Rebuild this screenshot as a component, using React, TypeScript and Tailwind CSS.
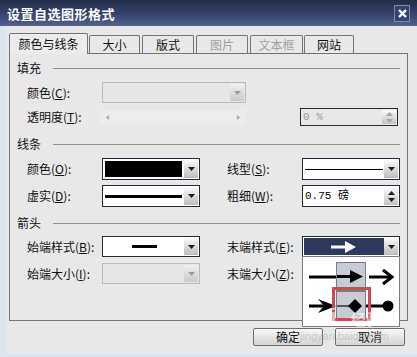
import React from "react";

const Down = ({ dim }: { dim?: boolean }) => (
  <svg width="7" height="4" viewBox="0 0 7 4">
    <path d="M0 0H7L3.5 4Z" fill={dim ? "#9c9c9c" : "#1e1e1e"} />
  </svg>
);

function ArrowBtn({ dim }: { dim?: boolean }) {
  return (
    <div
      className={
        dim
          ? "w-[14px] h-full flex items-center justify-center bg-linear-to-b from-[#f0f0f0] to-[#cacaca]"
          : "w-[14px] h-full flex items-center justify-center bg-linear-to-b from-[#fbfbfb] to-[#bcbcbc]"
      }
    >
      <Down dim={dim} />
    </div>
  );
}

function Combo({
  className,
  dim,
  children,
  innerClass,
}: {
  className: string;
  dim?: boolean;
  children?: React.ReactNode;
  innerClass?: string;
}) {
  return (
    <div
      className={`flex p-px border ${
        dim ? "border-[#b7bbbf] bg-[#e6e6e6]" : "border-[#222c38] bg-white"
      } ${className}`}
    >
      <div className={`flex-1 flex items-center ${innerClass ?? "p-px"}`}>{children}</div>
      <ArrowBtn dim={dim} />
    </div>
  );
}

function Spin({ className, text, dim }: { className: string; text: string; dim?: boolean }) {
  return (
    <div
      className={`flex p-px border border-[#222c38] ${dim ? "bg-[#e8e8e8]" : "bg-white"} ${className}`}
    >
      <div
        className={`flex-1 flex items-center pl-[1px] font-['Liberation_Mono','Noto_Sans_CJK_SC',monospace] text-[11px] leading-none ${
          dim ? "text-[#9a9a9a]" : "text-black"
        }`}
      >
        {text}
      </div>
      <div className="w-[14px] h-full flex flex-col items-center justify-center gap-[3px] bg-linear-to-b from-[#fbfbfb] to-[#c4c4c4]">
        <svg width="7" height="4" viewBox="0 0 7 4">
          <path d="M0 4H7L3.5 0Z" fill={dim ? "#a8a8a8" : "#1e1e1e"} />
        </svg>
        <svg width="7" height="4" viewBox="0 0 7 4">
          <path d="M0 0H7L3.5 4Z" fill={dim ? "#a8a8a8" : "#1e1e1e"} />
        </svg>
      </div>
    </div>
  );
}

function Label({ text, k, w }: { text: string; k: string; w: string }) {
  return (
    <div className={`${w} text-[12px] leading-none text-[#111]`}>
      {text}(<span className="underline underline-offset-1">{k}</span>):
    </div>
  );
}

function Section({ label }: { label: string }) {
  return (
    <div className="flex items-center h-[14px] pl-[7px] pr-[7px]">
      <span className="text-[12px] leading-none text-[#111]">{label}</span>
      <div className="ml-[12px] flex-1 h-px bg-[#8e8e8e]" />
    </div>
  );
}

function Tab({
  label,
  className,
  active,
  dim,
}: {
  label: string;
  className: string;
  active?: boolean;
  dim?: boolean;
}) {
  return (
    <div
      className={`flex items-center justify-center border border-b-0 border-[#6f777c] rounded-t-[2px] text-[12px] leading-none ${
        active ? "h-[21px] -mb-px relative z-10 bg-[#ececec]" : "h-[18px] bg-[#e8e8e8]"
      } ${dim ? "text-[#a3a3a3]" : "text-[#111]"} ${className}`}
    >
      {label}
    </div>
  );
}

function PopCell({ children, hl }: { children: React.ReactNode; hl?: boolean }) {
  return (
    <div
      className={`w-[30px] h-[29px] flex items-center ${
        hl ? "bg-[#c7cbd5] border border-[#757c8c]" : ""
      }`}
    >
      {children}
    </div>
  );
}

export default function App() {
  return (
    <div className="w-[417px] h-[357px] flex flex-col overflow-hidden bg-[#dce5ee] font-['Noto_Sans_CJK_SC','Noto_Sans',sans-serif] relative">
      {/* Title bar */}
      <div className="h-[26px] flex items-center justify-between pl-[7px] pr-[7px] bg-linear-to-b from-[#222d47] via-[#33426a] to-[#52628a]">
        <span className="text-[13px] font-bold text-white leading-none tracking-[0.5px]">
          设置自选图形格式
        </span>
        <div className="w-[16px] h-[17px] flex items-center justify-center bg-[#34456b] border border-[#7d8cab]">
          <svg width="9" height="9" viewBox="0 0 9 9">
            <path d="M1 1L8 8M8 1L1 8" stroke="white" strokeWidth="2.4" />
          </svg>
        </div>
      </div>

      {/* Body */}
      <div className="flex flex-1">
        <div className="w-[7px] bg-[#dce5ee]" />
        <div className="flex-1 bg-[#e8e8e8] pl-[2px] pt-[7px] flex flex-col">
          {/* Tabs */}
          <div className="flex items-end h-[20px]">
            <Tab label="颜色与线条" className="w-[79px]" active />
            <Tab label="大小" className="w-[51px] ml-[1px]" />
            <Tab label="版式" className="w-[52px] ml-[2px]" />
            <Tab label="图片" className="w-[52px] ml-[2px]" dim />
            <Tab label="文本框" className="w-[53px] ml-[2px]" dim />
            <Tab label="网站" className="w-[50px] ml-[1px]" />
          </div>

          {/* Panel */}
          <div className="w-[399px] h-[268px] border border-[#6f767b] bg-[#e8e8e8] flex flex-col">
            <div className="mt-[7px]">
              <Section label="填充" />
            </div>
            <div className="mt-[7px] h-[21px] flex items-center pl-[17px]">
              <Label text="颜色" k="C" w="w-[75px]" />
              <Combo className="w-[144px] h-[21px]" dim />
            </div>
            <div className="mt-[5px] h-[18px] flex items-center pl-[17px]">
              <Label text="透明度" k="T" w="w-[73px]" />
              <div className="w-[146px] h-[15px] bg-[#ececec] flex items-center justify-between px-[6px]">
                <svg width="3" height="5" viewBox="0 0 3 5">
                  <path d="M3 0V5L0 2.5Z" fill="#a6a6a6" />
                </svg>
                <svg width="3" height="5" viewBox="0 0 3 5">
                  <path d="M0 0V5L3 2.5Z" fill="#a6a6a6" />
                </svg>
              </div>
              <Spin className="ml-[54px] w-[98px] h-[18px]" text="0 %" dim />
            </div>

            <div className="mt-[11px]">
              <Section label="线条" />
            </div>
            <div className="mt-[7px] h-[22px] flex items-center pl-[17px]">
              <Label text="颜色" k="O" w="w-[75px]" />
              <Combo className="w-[98px] h-[22px]" innerClass="p-px pr-[2px]">
                <div className="w-full h-full bg-black" />
              </Combo>
              <Label text="线型" k="S" w="w-[75px] ml-[27px]" />
              <Combo className="w-[98px] h-[22px]">
                <div className="w-full h-px bg-black" />
              </Combo>
            </div>
            <div className="mt-[5px] h-[22px] flex items-center pl-[17px]">
              <Label text="虚实" k="D" w="w-[75px]" />
              <Combo className="w-[98px] h-[22px]" innerClass="p-px pr-[2px]">
                <div className="w-full h-[3px] bg-black" />
              </Combo>
              <Label text="粗细" k="W" w="w-[75px] ml-[27px]" />
              <Spin className="w-[98px] h-[22px]" text="0.75 磅" />
            </div>

            <div className="mt-[9px]">
              <Section label="箭头" />
            </div>
            <div className="mt-[6px] h-[21px] flex items-center pl-[17px]">
              <Label text="始端样式" k="B" w="w-[75px]" />
              <Combo className="w-[98px] h-[21px]" innerClass="justify-center">
                <div className="w-[25px] h-[3px] bg-black" />
              </Combo>
              <Label text="末端样式" k="E" w="w-[75px] ml-[27px]" />
              <div className="relative">
                <Combo className="w-[98px] h-[21px]" innerClass="p-0 h-full">
                  <div className="w-full h-full bg-[#2d3a5e] flex items-center justify-center">
                    <svg width="26" height="14" viewBox="0 0 26 14">
                      <path d="M0 5.5H15V8.5H0Z" fill="white" />
                      <path d="M14 1L25 7L14 13Z" fill="white" />
                    </svg>
                  </div>
                </Combo>

                {/* Drop-down popup */}
                <div className="absolute left-0 top-[20px] w-[98px] h-[71px] z-20 border border-[#7c7c7c] bg-white pl-[3px] pt-[5px]">
                  <div className="grid grid-cols-[30px_30px_30px]">
                    <PopCell>
                      <svg width="30" height="29" viewBox="0 0 30 29">
                        <path d="M3 13.5H30V16.5H3Z" fill="black" />
                      </svg>
                    </PopCell>
                    <PopCell hl>
                      <svg width="28" height="27" viewBox="0 0 28 27">
                        <path d="M0 12H15V15H0Z" fill="black" />
                        <path d="M13 7L26 13.5L13 20Z" fill="black" />
                      </svg>
                    </PopCell>
                    <PopCell>
                      <svg width="30" height="29" viewBox="0 0 30 29">
                        <path d="M3 13.5H25V16.5H3Z" fill="black" />
                        <path d="M17 8L26 15L17 22" stroke="black" strokeWidth="3" fill="none" />
                      </svg>
                    </PopCell>
                    <PopCell>
                      <svg width="30" height="29" viewBox="0 0 30 29">
                        <path d="M3 13.5H20V16.5H3Z" fill="black" />
                        <path d="M30 15L12 8L18 15L12 22Z" fill="black" />
                      </svg>
                    </PopCell>
                    <PopCell hl>
                      <svg width="28" height="27" viewBox="0 0 28 27">
                        <path d="M0 13H12V15H0Z" fill="#555" />
                        <path d="M18 7L25 14L18 21L11 14Z" fill="black" />
                      </svg>
                    </PopCell>
                    <PopCell>
                      <svg width="30" height="29" viewBox="0 0 30 29">
                        <path d="M0 13.5H20V16.5H0Z" fill="black" />
                        <circle cx="22" cy="15" r="5.5" fill="black" />
                      </svg>
                    </PopCell>
                  </div>
                  {/* red annotation box */}
                  <div className="absolute left-[29px] top-[30px] w-[39px] h-[34px] border-[3px] border-[#cf4a4c]" />
                </div>
              </div>
            </div>
            <div className="mt-[6px] h-[21px] flex items-center pl-[17px]">
              <Label text="始端大小" k="I" w="w-[75px]" />
              <Combo className="w-[98px] h-[21px]" dim />
              <Label text="末端大小" k="Z" w="w-[75px] ml-[27px]" />
              <Combo className="w-[98px] h-[21px]" />
            </div>
          </div>

          {/* Buttons */}
          <div className="mt-[7px] h-[18px] flex justify-end gap-[12px] pr-[12px]">
            <div className="w-[70px] h-[18px] flex items-center justify-center border border-[#6d6d6d] rounded-[2px] bg-linear-to-b from-[#f8f8f8] to-[#d3d3d3] text-[12px] leading-none text-[#111]">
              确定
            </div>
            <div className="w-[70px] h-[18px] flex items-center justify-center border border-[#6d6d6d] rounded-[2px] bg-linear-to-b from-[#f8f8f8] to-[#d3d3d3] text-[12px] leading-none text-[#111]">
              取消
            </div>
          </div>
        </div>
      </div>
      <div className="h-[4px] bg-[#dce5ee]" />

      {/* watermark */}
      <div className="absolute left-[304px] top-[305px] z-30 flex items-end pointer-events-none">
        <span className="text-[21px] font-bold leading-none text-white/60 font-['Liberation_Sans',sans-serif]">
          Bai
        </span>
        <span className="ml-[14px] text-[15px] font-bold leading-none text-white/60">经验</span>
      </div>
      <div className="absolute left-[300px] top-[331px] z-30 text-[11px] leading-none text-[#b9b9b9]/70 font-['Liberation_Sans',sans-serif] pointer-events-none">
        jingyan.baidu.com
      </div>
    </div>
  );
}
